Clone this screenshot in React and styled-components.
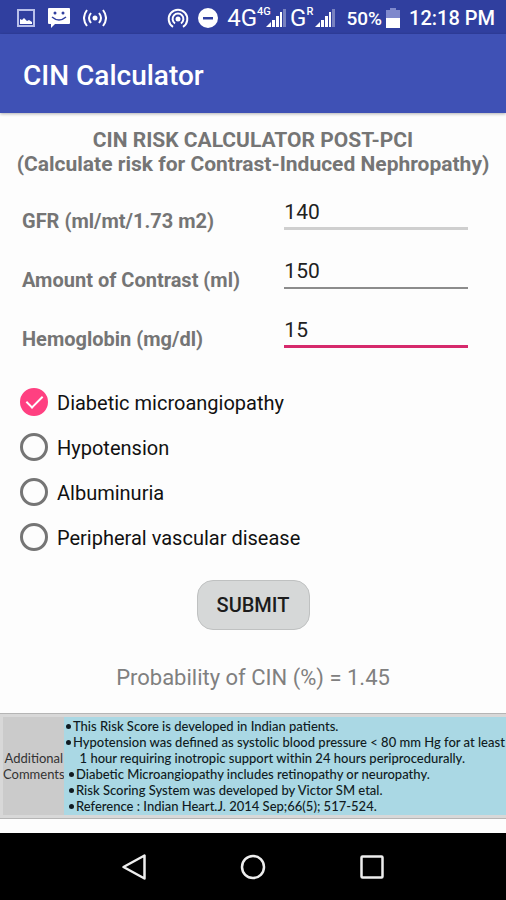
import { useState } from "react";
import styled, { createGlobalStyle } from "styled-components";

const FIELDS = [
	{ id: "gfr", label: "GFR (ml/mt/1.73 m2)", line: "#cfcfcf", thick: 3 },
	{ id: "contrast", label: "Amount of Contrast (ml)", line: "#8c8c8c", thick: 2 },
	{ id: "hemoglobin", label: "Hemoglobin (mg/dl)", line: "#d62a6c", thick: 3 },
];

const CONDITIONS = [
	"Diabetic microangiopathy",
	"Hypotension",
	"Albuminuria",
	"Peripheral vascular disease",
];

const GlobalStyle = createGlobalStyle`
	* {
		box-sizing: border-box;
	}

	body {
		margin: 0;
		background-color: #fdfdfd;
		font-family: Roboto, "Liberation Sans", sans-serif;
	}

	svg {
		display: block;
		flex-shrink: 0;
	}
`;

const Screen = styled.div`
	display: flex;
	flex-direction: column;
	min-height: 100vh;
`;

const StatusBarWrapper = styled.div`
	display: flex;
	align-items: center;
	justify-content: space-between;
	height: 34px;
	padding: 2px 11px 0 17px;
	color: #fff;
	background-color: #303f9f;
`;

const StatusGroup = styled.div`
	display: flex;
	align-items: center;
	gap: ${({ $gap }) => $gap}px;
`;

const Network = styled.div`
	display: flex;
	align-items: center;
	font-size: 24px;
	line-height: 24px;
`;

const NetworkType = styled.span`
	align-self: flex-start;
	width: 9px;
	font-size: 11px;
	font-weight: 500;
	line-height: 12px;
`;

const Battery = styled.div`
	display: flex;
	align-items: center;
	gap: 4px;
	margin-left: 2px;
	font-size: 19px;
	font-weight: 500;
`;

const Clock = styled.span`
	font-size: 20px;
	font-weight: 500;
`;

const AppBar = styled.header`
	display: flex;
	align-items: center;
	height: 79px;
	padding: 4px 23px 0;
	color: #fff;
	background-color: #3f51b5;
	box-shadow: 0 1px 3px rgba(0, 0, 0, 0.3);
`;

const AppTitle = styled.h1`
	margin: 0;
	font-size: 28px;
	font-weight: 500;
`;

const Main = styled.main`
	flex: 1;
	padding: 15px 0 14px;
`;

const Heading = styled.h2`
	margin: 0;
	font-size: 21px;
	font-weight: 700;
	line-height: 24px;
	text-align: center;
	color: #757575;
`;

const Form = styled.form`
	display: flex;
	flex-direction: column;
	padding: 24px 38px 0 22px;
`;

const Fields = styled.div`
	display: flex;
	flex-direction: column;
	gap: 29px;
`;

const Field = styled.div`
	display: grid;
	grid-template-columns: 10fr 7fr;
	align-items: end;
	height: 30px;
`;

const Label = styled.label`
	font-size: 20px;
	font-weight: 700;
	line-height: 18px;
	color: #757575;
`;

const Input = styled.input`
	width: 100%;
	height: 30px;
	padding: 0 0 4px;
	border: 0;
	border-bottom: ${({ $line, $thick }) => `${$thick}px solid ${$line}`};
	outline: 0;
	background: transparent;
	font-family: inherit;
	font-size: 21px;
	color: #212121;
`;

const Conditions = styled.div`
	display: flex;
	flex-direction: column;
	margin: 31px 0 21px -2px;
`;

const Condition = styled.label`
	display: flex;
	align-items: center;
	gap: 9px;
	height: 45px;
	font-size: 20px;
	line-height: 24px;
	color: #111;
	cursor: pointer;
`;

const ConditionName = styled.span`
	padding-top: 3px;
`;

const Checkbox = styled.input`
	appearance: none;
	flex-shrink: 0;
	width: 28px;
	height: 28px;
	margin: 0;
	border: 3px solid #757575;
	border-radius: 50%;
	cursor: pointer;

	&:checked {
		display: grid;
		place-items: center;
		border-color: #ff4081;
		background-color: #ff4081;
	}

	&:checked::after {
		content: "";
		width: 7px;
		height: 14px;
		margin-bottom: 4px;
		border: solid #fff;
		border-width: 0 2px 2px 0;
		transform: rotate(45deg);
	}
`;

const Submit = styled.button`
	align-self: center;
	width: 113px;
	height: 50px;
	margin-left: 16px;
	border: 1px solid #bfc1c1;
	border-radius: 16px;
	background-color: #d6d8d8;
	font-family: inherit;
	font-size: 20px;
	font-weight: 500;
	color: #1c1c1c;
	cursor: pointer;
`;

const Result = styled.p`
	margin: 36px 0 23px;
	font-size: 22px;
	line-height: 24px;
	text-align: center;
	color: #808080;
`;

const Comments = styled.section`
	display: flex;
	padding: 3px 0 3px 3px;
	border: solid #b5b5b5;
	border-width: 1px 0;
	background-color: #d8d8d8;
	font-family: Lato, "Liberation Sans", sans-serif;
`;

const CommentsTitle = styled.h3`
	display: flex;
	align-items: center;
	width: 61px;
	margin: 0;
	background-color: #cbcbcb;
	font-size: 13px;
	font-weight: 400;
	line-height: 16px;
	text-align: center;
	color: #333;
`;

const CommentsList = styled.ul`
	flex: 1;
	margin: 0;
	padding: 1px 0 1px 2px;
	list-style: none;
	background-color: #aad8e4;
	font-size: 13px;
	font-weight: 500;
	line-height: 16px;
	white-space: nowrap;
	color: #101b22;
`;

const Comment = styled.li`
	display: flex;
	padding-left: ${({ $indent }) => ($indent ? 3 : 0)}px;

	&::before {
		content: "";
		width: 5px;
		height: 5px;
		margin: 6px 2px 0 0;
		border-radius: 50%;
		background-color: #101b22;
	}
`;

const NavBarWrapper = styled.nav`
	display: flex;
	justify-content: space-around;
	align-items: center;
	height: 67px;
	padding: 0 74px;
	background-color: #000;
`;

const NavButton = styled.button`
	display: grid;
	place-items: center;
	width: 48px;
	height: 48px;
	padding: 0;
	border: 0;
	background: transparent;
	cursor: pointer;
`;

const Signal = () => (
	<svg width="20" height="20" viewBox="0 0 20 20" fill="#fff">
		<path d="M0 19 L5 14 V19Z" />
		<path d="M6 12h3v7H6zM10 8h3v11h-3zM14 4h2v15h-2z" />
		<path d="M17 1h3v18h-3z" opacity="0.35" />
	</svg>
);

const StatusBar = () => (
	<StatusBarWrapper>
		<StatusGroup $gap={12}>
			<svg width="18" height="18" viewBox="0 0 18 18">
				<rect x="1" y="1" width="16" height="16" fill="none" stroke="#b9c0ea" strokeWidth="2" />
				<path d="M3 15V10l2 1 2-2 3 3 2-1 3 2v2z" fill="#fff" />
			</svg>
			<svg width="24" height="22" viewBox="0 0 24 22">
				<path
					d="M2 1h20a1 1 0 0 1 1 1v14a1 1 0 0 1-1 1H8l-4 4v-4H2a1 1 0 0 1-1-1V2a1 1 0 0 1 1-1z"
					fill="#fff"
				/>
				<circle cx="8" cy="6" r="1.5" fill="#303f9f" />
				<circle cx="16" cy="6" r="1.5" fill="#303f9f" />
				<path d="M5 10q7 6 14 0" fill="none" stroke="#303f9f" strokeWidth="1.5" />
			</svg>
			<svg width="24" height="20" viewBox="0 0 24 20" fill="none" stroke="#fff" strokeWidth="2">
				<circle cx="12" cy="10" r="2.5" fill="#fff" stroke="none" />
				<path d="M8 5q-4 5 0 10M16 5q4 5 0 10M4 2q-6 8 0 16M20 2q6 8 0 16" />
			</svg>
		</StatusGroup>
		<StatusGroup $gap={9}>
			<svg width="22" height="20" viewBox="0 0 22 20" fill="none" stroke="#fff" strokeWidth="2">
				<circle cx="11" cy="11" r="2.5" fill="#fff" stroke="none" />
				<path d="M8 15.5a5.4 5.4 0 1 1 6 0" />
				<path d="M6 18.8a9.3 9.3 0 1 1 10 0" />
			</svg>
			<svg width="20" height="20" viewBox="0 0 20 20">
				<circle cx="10" cy="10" r="10" fill="#fff" />
				<path d="M5 9h10v2.5H5z" fill="#303f9f" />
			</svg>
			<StatusGroup $gap={4}>
				<Network>
					4G<NetworkType>4G</NetworkType>
					<Signal />
				</Network>
				<Network>
					G<NetworkType>R</NetworkType>
					<Signal />
				</Network>
			</StatusGroup>
			<Battery>
				50%
				<svg width="14" height="20" viewBox="0 0 14 20">
					<path d="M4 0h6v2h4v8H0V2h4z" fill="#7f89cc" />
					<path d="M0 10h14v10H0z" fill="#fff" />
				</svg>
			</Battery>
			<Clock>12:18 PM</Clock>
		</StatusGroup>
	</StatusBarWrapper>
);

const NavBar = () => (
	<NavBarWrapper>
		<NavButton aria-label="Back">
			<svg
				width="26"
				height="28"
				viewBox="0 0 26 28"
				fill="none"
				stroke="#eee"
				strokeWidth="2.5"
				strokeLinejoin="round"
			>
				<path d="M2.5 14 L23.5 2.5 V25.5Z" />
			</svg>
		</NavButton>
		<NavButton aria-label="Home">
			<svg width="26" height="26" viewBox="0 0 26 26" fill="none" stroke="#eee" strokeWidth="2.5">
				<circle cx="13" cy="13" r="11" />
			</svg>
		</NavButton>
		<NavButton aria-label="Recent apps">
			<svg width="26" height="26" viewBox="0 0 26 26" fill="none" stroke="#eee" strokeWidth="2.5">
				<rect x="2.5" y="2.5" width="21" height="21" rx="1" />
			</svg>
		</NavButton>
	</NavBarWrapper>
);

const App = () => {
	const [values, setValues] = useState({
		gfr: "140",
		contrast: "150",
		hemoglobin: "15",
	});
	const [checked, setChecked] = useState(["Diabetic microangiopathy"]);

	const onToggle = name => {
		setChecked(prev =>
			prev.includes(name) ? prev.filter(v => v !== name) : [...prev, name],
		);
	};

	return (
		<Screen>
			<GlobalStyle />
			<StatusBar />
			<AppBar>
				<AppTitle>CIN Calculator</AppTitle>
			</AppBar>
			<Main>
				<Heading>
					CIN RISK CALCULATOR POST-PCI
					<br />
					(Calculate risk for Contrast-Induced Nephropathy)
				</Heading>
				<Form onSubmit={e => e.preventDefault()}>
					<Fields>
						{FIELDS.map(({ id, label, line, thick }) => (
							<Field key={id}>
								<Label htmlFor={id}>{label}</Label>
								<Input
									id={id}
									inputMode="numeric"
									value={values[id]}
									onChange={e => setValues({ ...values, [id]: e.target.value })}
									$line={line}
									$thick={thick}
								/>
							</Field>
						))}
					</Fields>
					<Conditions>
						{CONDITIONS.map(name => (
							<Condition key={name}>
								<Checkbox
									type="checkbox"
									checked={checked.includes(name)}
									onChange={() => onToggle(name)}
								/>
								<ConditionName>{name}</ConditionName>
							</Condition>
						))}
					</Conditions>
					<Submit type="submit">SUBMIT</Submit>
				</Form>
				<Result>Probability of CIN (%) = 1.45</Result>
				<Comments>
					<CommentsTitle>Additional Comments</CommentsTitle>
					<CommentsList>
						<Comment>This Risk Score is developed in Indian patients.</Comment>
						<Comment>
							Hypotension was defined as systolic blood pressure &lt; 80 mm Hg for at least
							<br />
							&nbsp;&nbsp;1 hour requiring inotropic support within 24 hours periprocedurally.
						</Comment>
						<Comment $indent>
							Diabetic Microangiopathy includes retinopathy or neuropathy.
						</Comment>
						<Comment $indent>Risk Scoring System was developed by Victor SM etal.</Comment>
						<Comment $indent>Reference : Indian Heart.J. 2014 Sep;66(5); 517-524.</Comment>
					</CommentsList>
				</Comments>
			</Main>
			<NavBar />
		</Screen>
	);
};

export default App;
